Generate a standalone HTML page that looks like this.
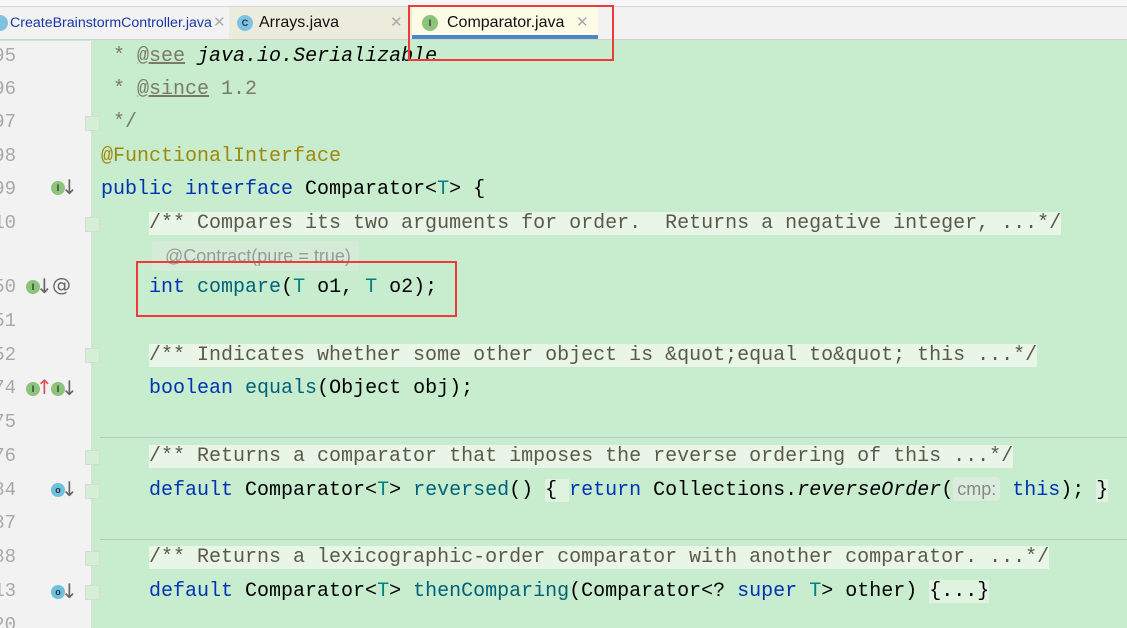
<!DOCTYPE html>
<html><head><meta charset="utf-8"><style>
*{margin:0;padding:0;box-sizing:border-box}
html,body{width:1127px;height:628px;overflow:hidden}
body{background:#c8ecce;position:relative;font-family:"Liberation Mono",monospace}
#top{position:absolute;left:0;top:0;width:1127px;height:7px;background:#f7f7f7;border-bottom:1px solid #d6d6d6}
#tabs{position:absolute;left:0;top:7px;width:1127px;height:33px;background:#f2f2f2;border-bottom:1px solid #d2d2d2}
.tab{position:absolute;top:0;height:32px;font:16px "Liberation Sans",sans-serif;line-height:32px;color:#111}
.x{color:#aaa;font-size:15px;position:absolute}
.ic{position:absolute;top:8px;width:16px;height:16px;border-radius:50%;font:bold 9px "Liberation Sans",sans-serif;text-align:center;line-height:16px}
#gut{position:absolute;left:0;top:41px;width:92px;height:587px;background:#f2f2f2;border-right:1px solid #dcdcdc}
.ln{position:absolute;left:-20px;width:36px;text-align:right;color:#a8a8a8;font-size:19px;height:33px;line-height:33px}
.l{position:absolute;left:101px;white-space:pre;font-size:20px;height:33px;line-height:33px;color:#000}
.cm{color:#7a7a6a}.dc{color:#5a5a4a;background:#e9f5e7}
.kw{color:#0033b3}.fn{color:#00627a}.ty{color:#007f7f}.an{color:#9e880d}
.fold{position:absolute;left:85px;width:15px;height:15px;border:1px solid #d0dfd0;background:#d6eed8}
.sep{position:absolute;left:100px;width:1027px;height:1px;background:#b8c8b8}
.gi{position:absolute;width:14px;height:14px;border-radius:50%;background:#8cc47a;font:bold 9px "Liberation Sans",sans-serif;text-align:center;line-height:14px;color:#333}
.ar{position:absolute;font:20px "DejaVu Sans",sans-serif;color:#666}
.box{position:absolute;border:2px solid #f03a3a}
</style></head><body>
<div id="top"></div>
<div id="tabs">
 <div class="tab" style="left:0;width:229px"><div class="ic" style="left:-8px;background:#7ec3e3"></div><span style="position:absolute;left:10px;color:#1a36a6;font-size:14.2px">CreateBrainstormController.java</span><span class="x" style="left:213px">✕</span></div>
 <div class="tab" style="left:229px;width:183px;background:#ececdc"><div class="ic" style="left:8px;background:#7ec3e3;color:#234">C</div><span style="position:absolute;left:30px">Arrays.java</span><span class="x" style="left:161px">✕</span></div>
 <div class="tab" style="left:412px;width:186px;background:#fbfbe6;border-bottom:4px solid #4a88c7"><div class="ic" style="left:10px;background:#8cc47a;color:#234">I</div><span style="position:absolute;left:35px">Comparator.java</span><span class="x" style="left:164px">✕</span></div>
</div>
<div id="gut"></div>
<div class="ln" style="top:40px">95</div>
<div class="ln" style="top:73px">96</div>
<div class="ln" style="top:106px">97</div>
<div class="ln" style="top:140px">98</div>
<div class="ln" style="top:173px">99</div>
<div class="ln" style="top:207px">10</div>
<div class="ln" style="top:271px">50</div>
<div class="ln" style="top:305px">51</div>
<div class="ln" style="top:339px">52</div>
<div class="ln" style="top:372px">74</div>
<div class="ln" style="top:406px">75</div>
<div class="ln" style="top:440px">76</div>
<div class="ln" style="top:474px">84</div>
<div class="ln" style="top:507px">87</div>
<div class="ln" style="top:541px">88</div>
<div class="ln" style="top:575px">13</div>
<div class="ln" style="top:609px">20</div>
<div class="gi" style="left:51px;top:181px">I</div><div class="ar" style="left:61px;top:175px">↓</div>
<div class="gi" style="left:26px;top:280px">I</div><div class="ar" style="left:36px;top:274px">↓</div><div class="ar" style="left:52px;top:274px;font-size:19px">@</div>
<div class="gi" style="left:26px;top:382px">I</div><div class="ar" style="left:36px;top:375px;color:#e05050">↑</div>
<div class="gi" style="left:51px;top:382px">I</div><div class="ar" style="left:61px;top:376px">↓</div>
<div class="gi" style="left:51px;top:483px;background:#6cc0e0">o</div><div class="ar" style="left:61px;top:477px">↓</div>
<div class="gi" style="left:51px;top:585px;background:#6cc0e0">o</div><div class="ar" style="left:61px;top:579px">↓</div>
<div class="fold" style="top:116px"></div>
<div class="fold" style="top:217px"></div>
<div class="fold" style="top:348px"></div>
<div class="fold" style="top:450px"></div>
<div class="fold" style="top:484px"></div>
<div class="fold" style="top:551px"></div>
<div class="fold" style="top:585px"></div>
<div class="sep" style="top:437px"></div>
<div class="sep" style="top:539px"></div>
<div class="l cm" style="top:40px"> * <u>@see</u> <i style="color:#000">java.io.Serializable</i></div>
<div class="l cm" style="top:73px"> * <u>@since</u> 1.2</div>
<div class="l cm" style="top:106px"> */</div>
<div class="l an" style="top:140px">@FunctionalInterface</div>
<div class="l" style="top:173px"><span class="kw">public interface</span> Comparator&lt;<span class="ty">T</span>&gt; {</div>
<div class="l" style="top:207px">    <span class="dc">/** Compares its two arguments for order.  Returns a negative integer, ...*/</span></div>
<div class="l" style="top:241px;left:152px;font:18px 'Liberation Sans',sans-serif;line-height:30px;height:30px;color:#999;background:#d4ecd6;padding:0 8px;border-radius:4px"> @Contract(pure = true)</div>
<div class="l" style="top:271px">    <span class="kw">int</span> <span class="fn">compare</span>(<span class="ty">T</span> o1, <span class="ty">T</span> o2);</div>
<div class="l" style="top:339px">    <span class="dc">/** Indicates whether some other object is &amp;quot;equal to&amp;quot; this ...*/</span></div>
<div class="l" style="top:372px">    <span class="kw">boolean</span> <span class="fn">equals</span>(Object obj);</div>
<div class="l" style="top:440px">    <span class="dc">/** Returns a comparator that imposes the reverse ordering of this ...*/</span></div>
<div class="l" style="top:474px">    <span class="kw">default</span> Comparator&lt;<span class="ty">T</span>&gt; <span class="fn">reversed</span>() <span style="background:#e0f2e0">{ </span><span class="kw">return</span> Collections.<i>reverseOrder</i>(<span style="font:18px 'Liberation Sans',sans-serif;color:#888;background:#dcecdc;border-radius:4px;padding:2px 4px">cmp:</span> <span class="kw">this</span>); <span style="background:#e0f2e0">}</span></div>
<div class="l" style="top:541px">    <span class="dc">/** Returns a lexicographic-order comparator with another comparator. ...*/</span></div>
<div class="l" style="top:575px">    <span class="kw">default</span> Comparator&lt;<span class="ty">T</span>&gt; <span class="fn">thenComparing</span>(Comparator&lt;? <span class="kw">super</span> <span class="ty">T</span>&gt; other) <span style="background:#e0f2e0">{...}</span></div>
<div class="box" style="left:408px;top:5px;width:206px;height:56px"></div>
<div class="box" style="left:136px;top:261px;width:321px;height:56px"></div>
</body></html>
